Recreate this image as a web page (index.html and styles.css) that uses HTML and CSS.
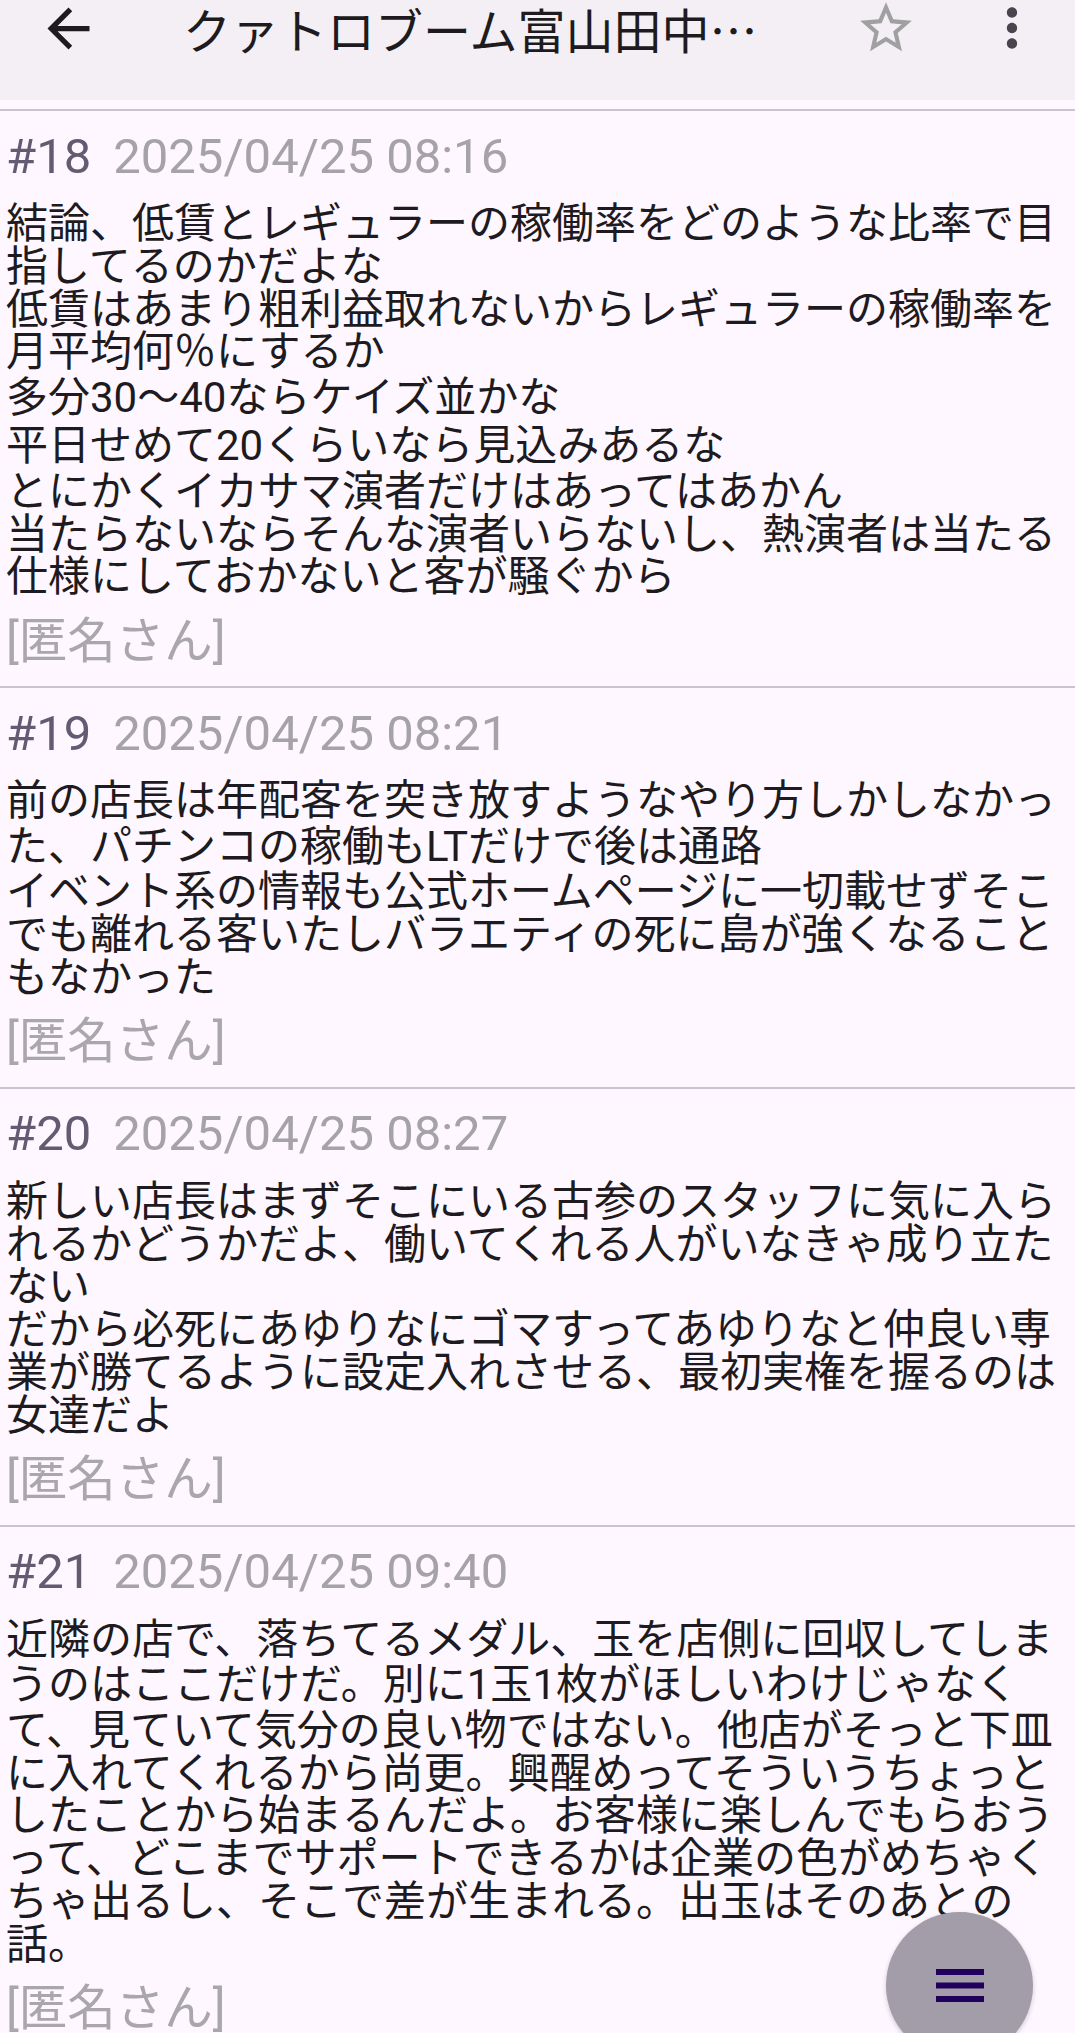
FILE: index.html
```html
<!DOCTYPE html>
<html lang="ja">
<head>
<meta charset="utf-8">
<title>クァトロブーム富山田中</title>
<link rel="stylesheet" href="styles.css">
</head>
<body>
<header class="appbar">
  <div class="appbar-row">
    <button class="icon-btn back" aria-label="戻る">
      <svg viewBox="0 0 24 24" width="63" height="63"><path fill="#1d1b20" d="M20 11H7.83l5.59-5.59L12 4l-8 8 8 8 1.41-1.41L7.83 13H20v-2z"/></svg>
    </button>
    <h1 class="title">クァトロブーム富山田中…</h1>
    <button class="icon-btn star" aria-label="お気に入り">
      <svg viewBox="0 0 24 24" width="62" height="62"><path fill="#a0a0a0" d="M22 9.24l-7.19-.62L12 2 9.19 8.63 2 9.24l5.46 4.73L5.82 21 12 17.27 18.18 21l-1.63-7.03L22 9.24zM12 15.4l-3.76 2.27 1-4.28-3.32-2.88 4.38-.38L12 6.1l1.71 4.04 4.38.38-3.32 2.88 1 4.28L12 15.4z"/></svg>
    </button>
    <button class="icon-btn more" aria-label="メニュー">
      <svg viewBox="0 0 24 24" width="62" height="62"><path fill="#49454f" d="M12 8c1.1 0 2-.9 2-2s-.9-2-2-2-2 .9-2 2 .9 2 2 2zm0 2c-1.1 0-2 .9-2 2s.9 2 2 2 2-.9 2-2-.9-2-2-2zm0 6c-1.1 0-2 .9-2 2s.9 2 2 2 2-.9 2-2-.9-2-2-2z"/></svg>
    </button>
  </div>
</header>

<main class="thread">
  <article class="post">
    <div class="post-head"><span class="num">#18</span><span class="date">2025/04/25 08:16</span></div>
    <p class="body">結論、低賃とレギュラーの稼働率をどのような比率で目指してるのかだよな<br>低賃はあまり粗利益取れないからレギュラーの稼働率を月平均何％にするか<br>多分<span class="latin">30</span>〜<span class="latin">40</span>ならケイズ並かな<br>平日せめて<span class="latin">20</span>くらいなら見込みあるな<br>とにかくイカサマ演者だけはあってはあかん<br>当たらないならそんな演者いらないし、熱演者は当たる仕様にしておかないと客が騒ぐから</p>
    <div class="author">[匿名さん]</div>
  </article>
  <article class="post">
    <div class="post-head"><span class="num">#19</span><span class="date">2025/04/25 08:21</span></div>
    <p class="body">前の店長は年配客を突き放すようなやり方しかしなかった、パチンコの稼働も<span class="latin">LT</span>だけで後は通路<br>イベント系の情報も公式ホームページに一切載せずそこでも離れる客いたしバラエティの死に島が強くなることもなかった</p>
    <div class="author">[匿名さん]</div>
  </article>
  <article class="post">
    <div class="post-head"><span class="num">#20</span><span class="date">2025/04/25 08:27</span></div>
    <p class="body">新しい店長はまずそこにいる古参のスタッフに気に入られるかどうかだよ、働いてくれる人がいなきゃ成り立たない<br>だから必死にあゆりなにゴマすってあゆりなと仲良い専業が勝てるように設定入れさせる、最初実権を握るのは女達だよ</p>
    <div class="author">[匿名さん]</div>
  </article>
  <article class="post">
    <div class="post-head"><span class="num">#21</span><span class="date">2025/04/25 09:40</span></div>
    <p class="body">近隣の店で、落ちてるメダル、玉を店側に回収してしまうのはここだけだ。別に<span class="latin">1</span>玉<span class="latin">1</span>枚がほしいわけじゃなくて、見ていて気分の良い物ではない。他店がそっと下皿に入れてくれるから尚更。興醒めってそういうちょっとしたことから始まるんだよ。お客様に楽しんでもらおうって、どこまでサポートできるかは企業の色がめちゃくちゃ出るし、そこで差が生まれる。出玉はそのあとの話。</p>
    <div class="author">[匿名さん]</div>
  </article>
</main>

<button class="fab" aria-label="メニュー">
  <svg viewBox="0 0 48 33" width="48" height="33"><rect x="0" y="0" width="48" height="6" fill="#21005d"/><rect x="0" y="13.5" width="48" height="6" fill="#21005d"/><rect x="0" y="27" width="48" height="6" fill="#21005d"/></svg>
</button>
</body>
</html>
```

FILE: styles.css
```css
html, body {
  height: 2033px;
  overflow: hidden;
}
body {
  margin: 0;
  background: #fef7ff;
  font-family: Roboto, "Noto Sans CJK JP", sans-serif;
  color: #1d1b20;
}

.appbar {
  background: #f3eff5;
  height: 100px;
}
.appbar-row {
  display: flex;
  align-items: center;
  height: 56px;
  padding: 0 32px 0 37px;
}
.icon-btn {
  flex: none;
  display: flex;
  align-items: center;
  justify-content: center;
  padding: 0;
  margin: 0;
  border: none;
  background: none;
  width: 63px;
  height: 63px;
}
.icon-btn.star,
.icon-btn.more {
  width: 62px;
  height: 62px;
}
.icon-btn.more {
  margin-left: 64px;
}
.title {
  flex: 1;
  min-width: 0;
  margin: 0 0 0 83px;
  font-family: "Noto Sans CJK JP", sans-serif;
  font-size: 48px;
  font-weight: 400;
  line-height: 56px;
  white-space: nowrap;
  color: #1d1b20;
}

.thread {
  margin-top: 9px;
}
.post {
  border-top: 2px solid #cac4d0;
  padding: 16.5px 17px 16.4px 6px;
}
.post-head {
  display: flex;
  gap: 22px;
  font-size: 49px;
  line-height: 57px;
}
.num {
  color: #625b71;
}
.date {
  color: #a6a2aa;
}
.body {
  margin: 18.5px 0 0;
  font-size: 42px;
  line-height: 42.8px;
  color: #1d1b20;
  line-break: loose;
}
.latin {
  line-height: 48.3px;
}
.author {
  margin-top: 14.7px;
  font-size: 48.5px;
  line-height: 56px;
  color: #aaa6ad;
}

.fab {
  position: fixed;
  right: 42px;
  bottom: -26px;
  width: 147px;
  height: 147px;
  border-radius: 50%;
  border: none;
  padding: 0;
  background: #a39ca9;
  display: flex;
  align-items: center;
  justify-content: center;
  box-shadow: 0 2px 5px rgba(0, 0, 0, 0.18);
}
```
